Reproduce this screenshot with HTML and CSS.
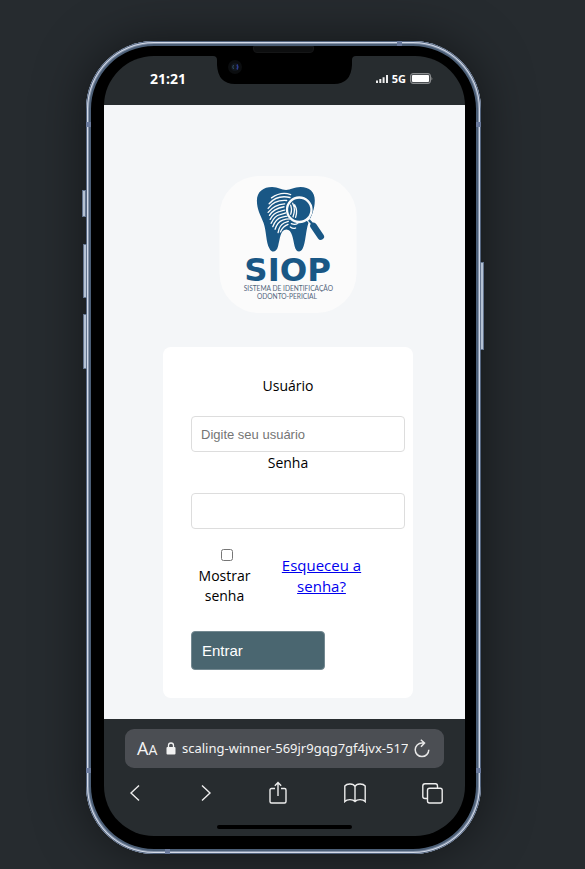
FILE: index.html
```html
<!DOCTYPE html>
<html lang="pt-BR">
<head>
<meta charset="utf-8">
<meta name="viewport" content="width=device-width, initial-scale=1">
<title>SIOP</title>
<link rel="stylesheet" href="styles.css">
</head>
<body>
<div class="phone">
  <span class="side-key side-key--mute"></span>
  <span class="side-key side-key--up"></span>
  <span class="side-key side-key--down"></span>
  <span class="side-key side-key--power"></span>
  <span class="band band--top"></span>
  <span class="band band--bottom"></span>
  <span class="band band--left-high"></span>
  <span class="band band--left-low"></span>
  <span class="band band--right-high"></span>
  <span class="band band--right-low"></span>
  <span class="speaker"></span>
  <div class="screen">
    <header class="status">
      <svg class="notch" viewBox="0 0 143 28" aria-hidden="true">
        <path d="M0 0Q4 0 4 4V9Q5 28 22 28H121Q138 28 139 9V4Q139 0 143 0Z" fill="#000"/>
        <circle cx="22" cy="11" r="7" fill="#0b0d0f"/>
        <circle cx="22" cy="11" r="4" fill="#11161d"/>
        <path d="M20.500 9Q19 11 20.500 13" stroke="#315067" fill="none"/>
        <path d="M24 8.500Q25.500 11 24 13.500" stroke="#2c3b91" stroke-width="1.500" fill="none"/>
      </svg>
      <time class="clock">21:21</time>
      <div class="signals">
        <svg class="bars" viewBox="0 0 12 8" aria-hidden="true" fill="#eee"><path d="M0 5.500h2V8H0zM3.300 4h2v4h-2zM6.600 2.300h2V8h-2zM10 0h2v8h-2z"/></svg>
        <span>5G</span>
        <svg class="battery" viewBox="0 0 23 11" aria-hidden="true"><rect x=".5" y=".5" width="20" height="10" rx="2.500" fill="#4c5053" stroke="#8a8d8f"/><rect x="2" y="2" width="17" height="7" rx="1" fill="#fff"/><path d="M21.500 3.500Q23 5.500 21.500 7.500Z" fill="#999"/></svg>
      </div>
    </header>

    <main class="page">
      <svg class="logo" viewBox="27 17 414 414" role="img" aria-label="SIOP">
        <rect x="27" y="17" width="414" height="414" rx="120" fill="#fbfbfb"/>
        <path d="M140 91C140 64 160 50 186 50C204 50 214 59 228 59C242 59 252 50 272 50C299 50 315 65 315 91C315 119 304 136 296 158C287 183 288 218 278 237C270 251 258 246 254 229C249 208 247 179 229 179C211 179 210 207 204 229C199 248 185 251 178 236C167 216 169 183 160 158C151 135 140 119 140 91Z" fill="#195785"/>
        <g fill="none" stroke="#fbfbfb" stroke-width="4" stroke-linecap="round">
          <path d="M184 83Q213 63 242 73"/>
          <path d="M177 101Q201 73 240 82"/>
          <path d="M174 115Q193 88 230 91"/>
          <path d="M174 127Q192 103 224 101"/>
          <path d="M178 136Q190 116 222 110"/>
          <path d="M180 148Q190 130 207 125Q219 120 224 120"/>
          <path d="M183 160Q194 137 210 134Q222 131 230 128"/>
          <path d="M188 170Q198 145 214 142Q227 138 236 138"/>
          <path d="M195 178Q202 155 218 150Q232 146 240 147"/>
          <path d="M204 188Q208 166 222 159L235 154"/>
          <path d="M211 186Q218 169 234 163"/>
          <path d="M244 161Q255 166 264 160M241 171Q250 178 257 174"/>
          <path d="M240 101Q248 116 242 133M248 99Q258 118 249 141M254 104Q264 121 257 142"/>
        </g>
        <circle cx="268" cy="119" r="36" fill="none" stroke="#195785" stroke-width="10"/>
        <circle cx="268" cy="119" r="37" fill="none" stroke="#fbfbfb" stroke-width="7"/>
        <path d="M293 146L306 160" stroke="#fbfbfb" stroke-width="12"/>
        <path d="M297 150L308 162" stroke="#195785" stroke-width="7"/>
        <path d="M311 168L333 200" stroke="#195785" stroke-width="20" stroke-linecap="round"/>
        <text class="logo-name" x="233" y="333" text-anchor="middle">SIOP</text>
        <text class="logo-line" x="235" y="365" text-anchor="middle">SISTEMA DE IDENTIFICAÇÃO</text>
        <text class="logo-line" x="231" y="389" text-anchor="middle">ODONTO-PERICIAL</text>
      </svg>

      <form class="card">
        <label class="label" for="user">Usuário</label>
        <input class="field" id="user" type="text" placeholder="Digite seu usuário">
        <label class="label" for="pass">Senha</label>
        <input class="field" id="pass" type="password">
        <div class="options">
          <div class="show">
            <input class="check" id="show" type="checkbox">
            <label for="show">Mostrar senha</label>
          </div>
          <a class="forgot" href="#">Esqueceu a senha?</a>
        </div>
        <button class="submit" type="submit">Entrar</button>
      </form>
    </main>

    <footer class="browser">
      <div class="address">
        <span class="aa">A<small>A</small></span>
        <svg class="lock" viewBox="0 0 10 13" aria-hidden="true"><rect x=".5" y="5" width="9" height="7.500" rx="1" fill="#f1f1f1"/><path d="M2.500 6V3.500a2.500 2.500 0 0 1 5 0V6" fill="none" stroke="#f1f1f1" stroke-width="1.300"/></svg>
        <span class="url">scaling-winner-569jr9gqg7gf4jvx-517</span>
        <button class="icon-button" type="button" aria-label="Recarregar"><svg class="reload" viewBox="0 0 16 20"><path d="M10 4H8A6.800 6.800 0 1 0 14.800 10.800M6.800 .8L10.500 4L7 7.800" fill="none" stroke="#e8e8e8" stroke-width="1.500"/></svg></button>
      </div>
      <nav class="tools">
        <button class="icon-button" type="button" aria-label="Voltar"><svg class="arrow" viewBox="0 0 14 18"><path d="M11 1.500L3 9L11 16.500"/></svg></button>
        <button class="icon-button" type="button" aria-label="Avançar"><svg class="arrow" viewBox="0 0 14 18"><path d="M3 1.500L11 9L3 16.500"/></svg></button>
        <button class="icon-button" type="button" aria-label="Compartilhar"><svg class="share" viewBox="0 0 18 24"><path d="M6 7.500H2.500Q1 7.500 1 9V20.500Q1 22 2.500 22H15.500Q17 22 17 20.500V9Q17 7.500 15.500 7.500H12M9 15V1.500M5.800 4.700L9 1.500L12.200 4.700"/></svg></button>
        <button class="icon-button" type="button" aria-label="Favoritos"><svg class="book" viewBox="0 0 22 20"><path d="M11 18.500V3.500C9.500 .3 3 .3 .8 3V18.500C3 16 9 16 11 18.500C13 16 19 16 21.200 18.500V3C19 .3 12.500 .3 11 3.500"/></svg></button>
        <button class="icon-button" type="button" aria-label="Abas"><svg class="tabs" viewBox="0 0 21 21"><path d="M5.500 15.500H3Q.8 15.500 .8 13.500V3Q.8 .8 3 .8H13.500Q15.500 .8 15.500 3V5"/><rect x="5.500" y="5.300" width="14.700" height="14.700" rx="2"/></svg></button>
      </nav>
      <span class="home"></span>
    </footer>
  </div>
</div>
</body>
</html>
```
FILE: styles.css
```css
* {
  box-sizing: border-box;
}

body {
  margin: 0;
  min-height: 100vh;
  padding: 41px 18px 15px 0;
  background: #262b2f;
  color: #000;
  font-family: "Open Sans", "Noto Sans", sans-serif;
  font-size: 14px;
  line-height: 21px;
}

.phone {
  position: relative;
  max-width: 395px;
  margin: 0 auto;
  padding: 15px 16px 18px 18px;
  border-radius: 68px;
  background: #000;
  box-shadow:
    inset 0 0 0 1px #52637d,
    inset 0 0 0 2px #d3dae8,
    inset 0 0 0 3px #8795ab,
    inset 0 0 0 5px #4b5e76,
    0 0 50px rgba(0, 0, 0, 0.5);
}

.side-key {
  position: absolute;
  width: 4px;
  border: 1px solid #64758f;
  background: #b4c1d3;
}

.side-key--mute {
  left: -4px;
  top: 149px;
  height: 27px;
}

.side-key--up {
  left: -3px;
  top: 203px;
  height: 54px;
}

.side-key--down {
  left: -3px;
  top: 273px;
  height: 55px;
}

.side-key--power {
  right: -3px;
  top: 221px;
  height: 88px;
}

.band {
  position: absolute;
  width: 5px;
  height: 5px;
  background: #6a7a9c;
}

.band--top {
  top: 0;
  right: 79px;
}

.band--bottom {
  bottom: 0;
  left: 79px;
}

.band--left-high {
  top: 81px;
  left: 0;
}

.band--left-low {
  bottom: 81px;
  left: 0;
}

.band--right-high {
  top: 81px;
  right: 0;
}

.band--right-low {
  bottom: 81px;
  right: 0;
}

.speaker {
  position: absolute;
  top: 5px;
  left: 50%;
  width: 61px;
  height: 7px;
  margin-left: -31px;
  border: 1px solid #151617;
  border-radius: 0 0 4px 4px;
  background: #0d0e0f;
}

.screen {
  overflow: hidden;
  border-radius: 50px;
  background: #272c2f;
}

.status {
  position: relative;
  display: flex;
  justify-content: space-between;
  align-items: center;
  height: 49px;
  padding: 0 32px 4px 46px;
  color: #fff;
}

.notch {
  position: absolute;
  top: 0;
  left: 50%;
  width: 143px;
  height: 28px;
  margin-left: -72px;
}

.clock {
  font-size: 14px;
  font-weight: 700;
}

.signals {
  display: flex;
  align-items: center;
  gap: 4px;
  font-size: 11px;
  font-weight: 700;
}

.bars {
  width: 12px;
  height: 8px;
}

.battery {
  width: 23px;
  height: 11px;
}

.page {
  display: flex;
  flex-direction: column;
  align-items: center;
  gap: 34px;
  padding: 71px 0 21px 7px;
  background: #f4f6f8;
}

.logo {
  width: 138px;
  height: 137px;
}

.logo-name {
  fill: #195785;
  font: 700 98px "DejaVu Sans", sans-serif;
}

.logo-line {
  fill: #53667b;
  font: 400 20px Lato, sans-serif;
}

.card {
  width: 250px;
  padding: 28px;
  border-radius: 8px;
  background: #fff;
  text-align: center;
}

.label {
  display: block;
  margin-bottom: 20px;
}

.field {
  display: block;
  box-sizing: content-box;
  width: 100%;
  height: 16px;
  padding: 9px;
  border: 1px solid #ddd;
  border-radius: 4px;
  background: #fff;
  font: 13px "Liberation Sans", Arial, sans-serif;
}

.field::placeholder {
  color: #757575;
}

.options {
  display: grid;
  grid-template-columns: 67px 1fr;
  align-items: center;
  margin: 17px 0 25px;
}

.show {
  line-height: 20px;
}

.check {
  display: block;
  width: 12px;
  height: 12px;
  margin: 3px 24px 5px 30px;
}

.forgot {
  padding: 0 20px;
  color: #0000ee;
  font-size: 15px;
}

.submit {
  display: block;
  width: 134px;
  height: 39px;
  padding: 0 10px;
  border: 1px solid #748991;
  border-radius: 4px;
  background: #4a6670;
  color: #fff;
  font: 15px "Liberation Sans", Arial, sans-serif;
  text-align: left;
}

.browser {
  padding: 10px 21px 7px;
  color: #f4f4f4;
}

.address {
  display: flex;
  align-items: center;
  height: 39px;
  padding: 0 14px 0 12px;
  border-radius: 9px;
  background: #4b4e53;
}

.aa {
  width: 29px;
  font-size: 18px;
}

.aa small {
  font-size: 14px;
}

.lock {
  flex: none;
  width: 10px;
  height: 13px;
}

.url {
  flex: 1;
  min-width: 0;
  margin: 0 6px;
  overflow: hidden;
  font-family: "Noto Sans", sans-serif;
  font-size: 13px;
  white-space: nowrap;
}

.icon-button {
  display: block;
  padding: 0;
  border: 0;
  background: none;
}

.icon-button svg {
  display: block;
}

.reload {
  width: 16px;
  height: 20px;
}

.tools {
  display: flex;
  justify-content: space-between;
  align-items: center;
  height: 50px;
  padding: 0 1px 0 3px;
}

.tools svg {
  fill: none;
  stroke: #ededed;
  stroke-width: 1.4;
}

.arrow {
  width: 14px;
  height: 18px;
}

.share {
  width: 18px;
  height: 24px;
}

.book {
  width: 22px;
  height: 20px;
}

.tabs {
  width: 21px;
  height: 21px;
}

.home {
  display: block;
  width: 135px;
  height: 4px;
  margin: 7px auto 0;
  border-radius: 2px;
  background: #000;
}
```
